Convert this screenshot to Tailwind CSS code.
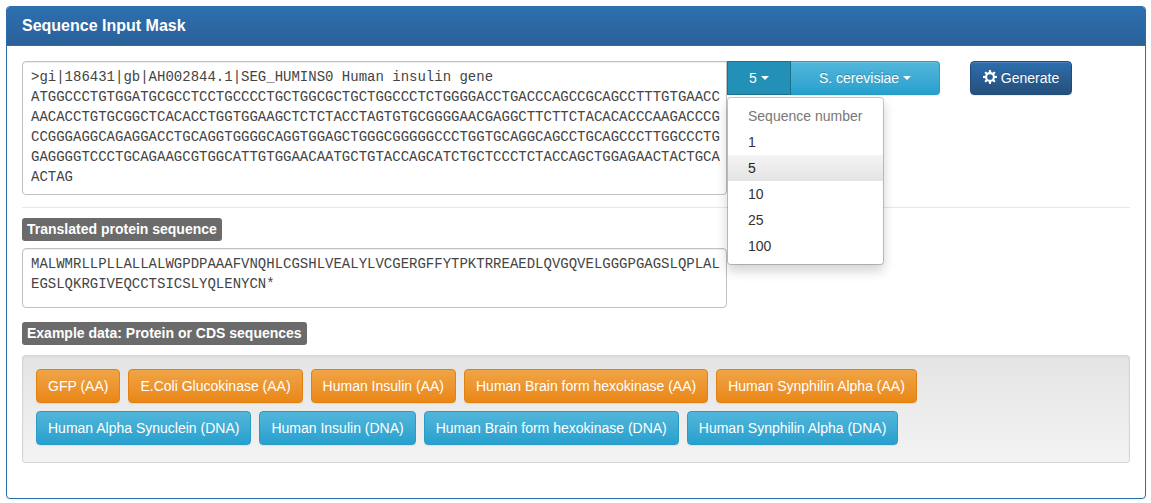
<!DOCTYPE html>
<html lang="en">
<head>
<meta charset="utf-8">
<title>Sequence Input Mask</title>
<script src="https://cdn.jsdelivr.net/npm/@tailwindcss/browser@4"></script>
</head>
<body class="bg-white px-[6px] pt-[6px] pb-1 font-['Liberation_Sans',Arial,sans-serif] text-sm leading-5 text-[#333333]">
<main class="mr-[-1px] overflow-hidden rounded-[4px] border border-[#2b6dad] bg-white shadow-[0_1px_2px_rgba(0,0,0,0.05)]">
  <header class="border-b border-[#2b6dad] bg-linear-to-b from-[#2d6fb0] to-[#2a6198] px-[15px] py-[10px]">
    <h1 class="text-base leading-[18px] font-bold text-white">Sequence Input Mask</h1>
  </header>
  <div class="px-[15px] pt-[15px] pb-[35px]">
    <section class="grid grid-cols-[minmax(0,1fr)_403px]">
      <textarea aria-label="Sequence input" rows="6" spellcheck="false" class="block h-[134px] w-full resize-none overflow-hidden rounded-[4px] rounded-tr-none border border-[#c0c0c0] bg-white pt-[5px] pr-1 pb-[7px] pl-2 font-['Liberation_Mono',monospace] text-sm leading-5 break-all text-[#444444] shadow-[inset_0_1px_1px_rgba(0,0,0,0.075)] outline-none">&gt;gi|186431|gb|AH002844.1|SEG_HUMINS0 Human insulin gene
ATGGCCCTGTGGATGCGCCTCCTGCCCCTGCTGGCGCTGCTGGCCCTCTGGGGACCTGACCCAGCCGCAGCCTTTGTGAACCAACACCTGTGCGGCTCACACCTGGTGGAAGCTCTCTACCTAGTGTGCGGGGAACGAGGCTTCTTCTACACACCCAAGACCCGCCGGGAGGCAGAGGACCTGCAGGTGGGGCAGGTGGAGCTGGGCGGGGGCCCTGGTGCAGGCAGCCTGCAGCCCTTGGCCCTGGAGGGGTCCCTGCAGAAGCGTGGCATTGTGGAACAATGCTGTACCAGCATCTGCTCCCTCTACCAGCTGGAGAACTACTGCAACTAG</textarea>
      <div class="flex items-start">
        <div class="relative flex">
          <button type="button" aria-haspopup="menu" aria-expanded="true" class="flex h-[34px] w-16 items-center justify-center gap-1 border border-[#1c7190] bg-[#2390b7] text-white">5
            <svg class="h-1 w-2" viewBox="0 0 8 4" fill="currentColor" aria-hidden="true"><path d="M0 0h8L4 4z"/></svg>
          </button>
          <button type="button" aria-haspopup="menu" aria-expanded="false" class="flex h-[34px] w-[149px] items-center justify-center gap-1 rounded-r-[4px] border border-l-0 border-[#2a9bc4] bg-linear-to-b from-[#52b6da] to-[#26a0ce] text-white shadow-[inset_0_1px_0_rgba(255,255,255,0.15),0_1px_1px_rgba(0,0,0,0.075)] text-shadow-[0_-1px_0_rgba(0,0,0,0.2)]">S. cerevisiae
            <svg class="h-1 w-2" viewBox="0 0 8 4" fill="currentColor" aria-hidden="true"><path d="M0 0h8L4 4z"/></svg>
          </button>
          <div role="menu" aria-label="Sequence number" class="absolute top-9 left-0 z-10 flex w-[157px] flex-col rounded-[4px] border border-black/20 bg-white bg-clip-padding py-[5px] shadow-[0_6px_12px_rgba(0,0,0,0.175)]">
            <p class="px-5 py-[3px] text-[#777777]">Sequence number</p>
            <button type="button" role="menuitem" class="px-5 py-[3px] text-left">1</button>
            <button type="button" role="menuitem" class="bg-linear-to-b from-[#f4f4f4] to-[#e4e4e4] px-5 py-[3px] text-left text-[#262626]">5</button>
            <button type="button" role="menuitem" class="px-5 py-[3px] text-left">10</button>
            <button type="button" role="menuitem" class="px-5 py-[3px] text-left">25</button>
            <button type="button" role="menuitem" class="px-5 py-[3px] text-left">100</button>
          </div>
        </div>
        <button type="button" class="ml-[30px] flex h-[34px] w-[102px] items-center justify-center gap-1 rounded-[4px] border border-[#204d78] bg-linear-to-b from-[#2d6eae] to-[#254f7b] text-white shadow-[inset_0_1px_0_rgba(255,255,255,0.15),0_1px_1px_rgba(0,0,0,0.075)] text-shadow-[0_-1px_0_rgba(0,0,0,0.2)]">
          <svg class="mb-[2px] size-[14px]" viewBox="0 0 14 14" aria-hidden="true"><g fill="currentColor"><path id="tooth" d="M6.100 0h1.800l.4 3H5.700z"/><use href="#tooth" transform="rotate(45 7 7)"/><use href="#tooth" transform="rotate(90 7 7)"/><use href="#tooth" transform="rotate(135 7 7)"/><use href="#tooth" transform="rotate(180 7 7)"/><use href="#tooth" transform="rotate(225 7 7)"/><use href="#tooth" transform="rotate(270 7 7)"/><use href="#tooth" transform="rotate(315 7 7)"/></g><circle cx="7" cy="7" r="3.900" fill="none" stroke="currentColor" stroke-width="2.100"/></svg>
          Generate
        </button>
      </div>
    </section>
    <hr class="mt-3 mb-[10px] border-[#e8e8e8]">
    <section class="grid grid-cols-[minmax(0,1fr)_403px]">
      <label for="protein" class="h-[23px] justify-self-start rounded-[3px] bg-[#6b6b6b] px-[5px] text-sm leading-[23px] font-bold text-white">Translated protein sequence</label>
      <textarea id="protein" spellcheck="false" class="col-start-1 mt-[7px] block h-[60px] w-full resize-none overflow-hidden rounded-[4px] border border-[#c0c0c0] bg-white pt-[5px] pr-1 pb-[7px] pl-2 font-['Liberation_Mono',monospace] text-sm leading-5 break-all text-[#444444] shadow-[inset_0_1px_1px_rgba(0,0,0,0.075)] outline-none">MALWMRLLPLLALLALWGPDPAAAFVNQHLCGSHLVEALYLVCGERGFFYTPKTRREAEDLQVGQVELGGGPGAGSLQPLALEGSLQKRGIVEQCCTSICSLYQLENYCN*</textarea>
    </section>
    <section class="mt-[14px] flex flex-col items-start">
      <h2 class="h-[23px] rounded-[3px] bg-[#6b6b6b] px-[5px] text-sm leading-[23px] font-bold text-white">Example data: Protein or CDS sequences</h2>
      <div class="mt-[10px] w-full rounded-[3px] border border-[#d6d6d6] bg-linear-to-b from-[#e4e4e4] to-[#f3f3f3] px-[13px] pt-[13px] pb-[17px] text-white shadow-[inset_0_1px_3px_rgba(0,0,0,0.05),0_1px_0_rgba(255,255,255,0.1)] text-shadow-[0_-1px_0_rgba(0,0,0,0.2)]">
        <div class="flex flex-wrap gap-2">
          <button type="button" class="h-[34px] rounded-[4px] border border-[#df8213] bg-linear-to-b from-[#f0a445] to-[#e98713] px-[11px] shadow-[0_1px_1px_rgba(0,0,0,0.075)]">GFP (AA)</button>
          <button type="button" class="h-[34px] rounded-[4px] border border-[#df8213] bg-linear-to-b from-[#f0a445] to-[#e98713] px-[11px] shadow-[0_1px_1px_rgba(0,0,0,0.075)]">E.Coli Glucokinase (AA)</button>
          <button type="button" class="h-[34px] rounded-[4px] border border-[#df8213] bg-linear-to-b from-[#f0a445] to-[#e98713] px-[11px] shadow-[0_1px_1px_rgba(0,0,0,0.075)]">Human Insulin (AA)</button>
          <button type="button" class="h-[34px] rounded-[4px] border border-[#df8213] bg-linear-to-b from-[#f0a445] to-[#e98713] px-[11px] shadow-[0_1px_1px_rgba(0,0,0,0.075)]">Human Brain form hexokinase (AA)</button>
          <button type="button" class="h-[34px] rounded-[4px] border border-[#df8213] bg-linear-to-b from-[#f0a445] to-[#e98713] px-[11px] shadow-[0_1px_1px_rgba(0,0,0,0.075)]">Human Synphilin Alpha (AA)</button>
        </div>
        <div class="mt-2 flex flex-wrap gap-2">
          <button type="button" class="h-[34px] rounded-[4px] border border-[#2a9bc4] bg-linear-to-b from-[#52b6da] to-[#26a0ce] px-[11px] shadow-[0_1px_1px_rgba(0,0,0,0.075)]">Human Alpha Synuclein (DNA)</button>
          <button type="button" class="h-[34px] rounded-[4px] border border-[#2a9bc4] bg-linear-to-b from-[#52b6da] to-[#26a0ce] px-[11px] shadow-[0_1px_1px_rgba(0,0,0,0.075)]">Human Insulin (DNA)</button>
          <button type="button" class="h-[34px] rounded-[4px] border border-[#2a9bc4] bg-linear-to-b from-[#52b6da] to-[#26a0ce] px-[11px] shadow-[0_1px_1px_rgba(0,0,0,0.075)]">Human Brain form hexokinase (DNA)</button>
          <button type="button" class="h-[34px] rounded-[4px] border border-[#2a9bc4] bg-linear-to-b from-[#52b6da] to-[#26a0ce] px-[11px] shadow-[0_1px_1px_rgba(0,0,0,0.075)]">Human Synphilin Alpha (DNA)</button>
        </div>
      </div>
    </section>
  </div>
</main>
</body>
</html>
